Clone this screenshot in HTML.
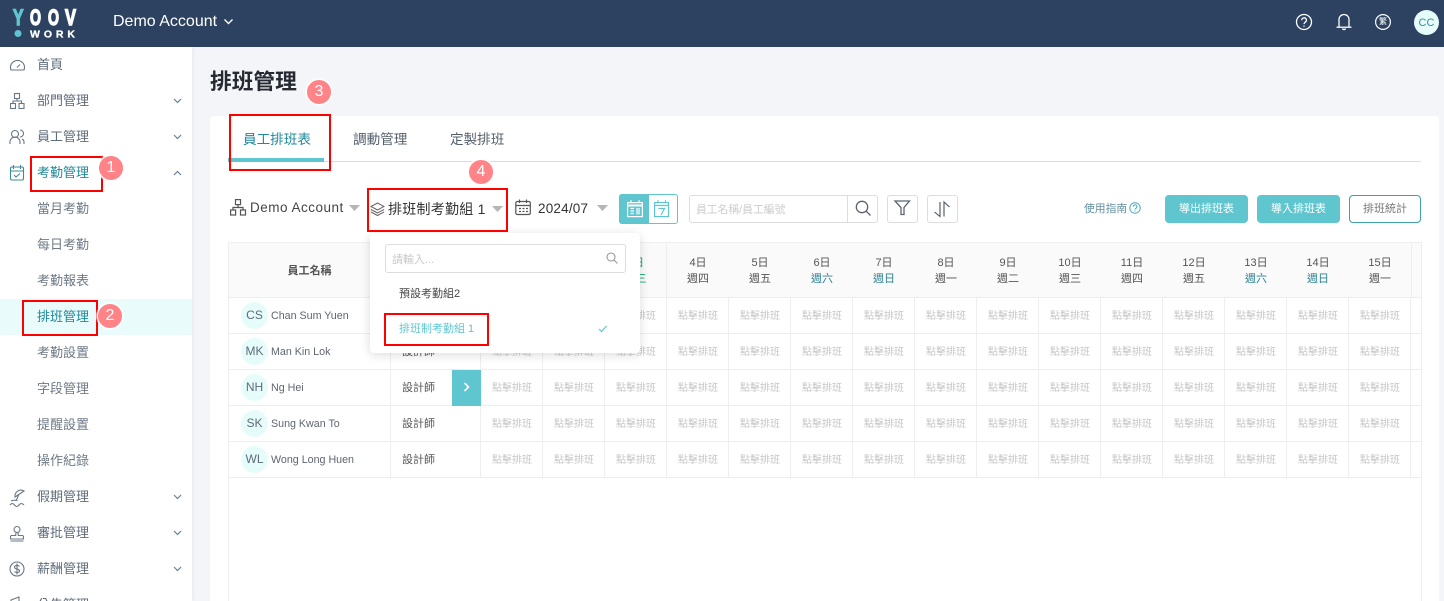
<!DOCTYPE html>
<html lang="zh-Hant"><head><meta charset="utf-8"><title>排班管理</title>
<style>
*{box-sizing:border-box}
html,body{margin:0;padding:0;height:601px;overflow:hidden}
#w{position:absolute;left:0;top:0;width:1444px;height:601px;overflow:hidden;background:#f4f5f8;font-family:"Liberation Sans","Noto Sans CJK TC",sans-serif;color:#333}
.a{position:absolute;white-space:nowrap}
svg{position:absolute;overflow:visible}
#top{left:0;top:0;width:1444px;height:47px;background:#2c4260}
#side{left:0;top:47px;width:192px;height:554px;background:#fff;box-shadow:1px 0 4px rgba(0,0,0,.06)}
.m{position:absolute;left:37px;font-size:13px;line-height:18px;color:#5f6b7a;white-space:nowrap}
.s{color:#6f7a86}
.ic{fill:none;stroke:#6b7785;stroke-width:1.1}
.ch{fill:none;stroke:#66809a;stroke-width:1.2}
.bad{position:absolute;width:26px;height:26px;border-radius:50%;background:#ff8387;border:1px solid #fff;color:#fff;font-size:16px;line-height:24px;text-align:center;box-shadow:0 0 0 1px rgba(255,255,255,.6)}
.red{position:absolute;border:2px solid #f00}
#card{left:210px;top:116px;width:1229px;height:485px;background:#fff;border-radius:4px 4px 0 0}
.btn{position:absolute;top:195px;height:28px;border-radius:4px;background:#5fc6cf;color:#fff;font-size:11px;line-height:28px;text-align:center}
.tb{position:absolute;left:228px;top:242px;width:1194px;height:359px;border-left:1px solid #eee;border-right:1px solid #eee;border-top:1px solid #eee}
.hd{position:absolute;top:243px;height:55px;background:#fafafa;border-right:1px solid #eee;border-bottom:1px solid #eee;font-size:11px;line-height:16px;text-align:center;color:#555;padding-top:12px}
.hd b{font-weight:400;color:#2f8394}
.r{position:absolute;left:229px;width:1192px;height:36px;border-bottom:1px solid #eee}
.av{position:absolute;left:12px;top:4px;width:27px;height:27px;border-radius:50%;background:#e6fcfb;color:#5f6b7a;font-size:12px;line-height:26px;text-align:center}
.n{position:absolute;left:42px;top:0;line-height:36px;font-size:10.7px;color:#5f6672;white-space:nowrap}
.j{position:absolute;left:173px;top:0;line-height:36px;font-size:11px;color:#555}
.v{position:absolute;top:0;width:1px;height:35px;background:#eee}
.gr{display:flex;position:absolute;left:252px;top:0;height:35px}
.gr i{display:block;width:62px;border-right:1px solid #eee;line-height:37px;padding-left:1px;font-size:10px;color:#c6c6c6;text-align:center;font-style:normal;white-space:nowrap}
.gr i:last-child{width:10px;border:0;font-size:0}
</style></head><body><div id="w">

<div class="a" id="top"></div>
<svg style="left:0;top:0" width="90" height="47">
<text x="13" y="25" font-size="22" font-weight="700" textLength="10.5" lengthAdjust="spacingAndGlyphs" fill="#5fc6cf" stroke="#5fc6cf" stroke-width="1.500" font-family="Liberation Sans">Y</text>
<text x="30" y="25" font-size="22" font-weight="700" textLength="11" lengthAdjust="spacingAndGlyphs" fill="#fff" stroke="#fff" stroke-width="1.500" font-family="Liberation Sans">O</text>
<text x="48" y="25" font-size="22" font-weight="700" textLength="11" lengthAdjust="spacingAndGlyphs" fill="#fff" stroke="#fff" stroke-width="1.500" font-family="Liberation Sans">O</text>
<text x="65" y="25" font-size="22" font-weight="700" textLength="11" lengthAdjust="spacingAndGlyphs" fill="#fff" stroke="#fff" stroke-width="1.500" font-family="Liberation Sans">V</text>
<circle cx="18" cy="33.500" r="3.500" fill="#5fc6cf"/>
<text x="30" y="37.500" font-size="10.500" font-weight="700" textLength="45" fill="#fff" stroke="#fff" stroke-width=".3" font-family="Liberation Sans">WORK</text>
</svg>
<div class="a" style="left:113px;top:12px;font-size:16px;line-height:20px;color:#fff">Demo Account</div>
<svg style="left:223px;top:18px" width="12" height="8"><path d="M1.500 1.500L5.500 5.500L9.500 1.500" fill="none" stroke="#fff" stroke-width="1.400"/></svg>
<svg style="left:1295px;top:13px" width="18" height="18" fill="none" stroke="#fff" stroke-width="1.300"><circle cx="9" cy="9" r="7.500"/><path d="M6.800 7.200a2.300 2.300 0 1 1 3.500 1.900c-.9.600-1.300 1-1.300 2"/><path d="M9 12.600v1.200"/></svg>
<svg style="left:1335px;top:12px" width="18" height="20" fill="none" stroke="#fff" stroke-width="1.300"><path d="M4 15V7.500a5 5 0 0 1 10 0V15"/><path d="M1.500 15.200h15"/><path d="M7.500 16.500a1.600 1.600 0 0 0 3 0"/></svg>
<svg style="left:1375px;top:14px" width="16" height="16" fill="none" stroke="#fff" stroke-width="1.200"><circle cx="8" cy="8" r="7.400"/></svg>
<div class="a" style="left:1379px;top:16px;font-size:8px;line-height:12px;color:#d5dbe2;font-weight:700">繁</div>
<div class="a" style="left:1414px;top:10px;width:25px;height:25px;border-radius:50%;background:#e6fcfb;color:#3f8a9c;font-size:11px;line-height:26px;text-align:center">CC</div>

<div class="a" id="side"></div>
<div class="a" style="left:0;top:299px;width:192px;height:36px;background:#e9fbfa"></div>
<div class="m" style="top:56px">首頁</div>
<div class="m" style="top:92px">部門管理</div>
<div class="m" style="top:128px">員工管理</div>
<div class="m" style="top:164px;color:#1f8a9c">考勤管理</div>
<div class="m s" style="top:200px">當月考勤</div>
<div class="m s" style="top:236px">每日考勤</div>
<div class="m s" style="top:272px">考勤報表</div>
<div class="m" style="top:308px;color:#1f8a9c">排班管理</div>
<div class="m s" style="top:344px">考勤設置</div>
<div class="m s" style="top:380px">字段管理</div>
<div class="m s" style="top:416px">提醒設置</div>
<div class="m s" style="top:452px">操作紀錄</div>
<div class="m" style="top:488px">假期管理</div>
<div class="m" style="top:524px">審批管理</div>
<div class="m" style="top:560px">薪酬管理</div>
<div class="m" style="top:596px">公告管理</div>

<svg style="left:0;top:47px" width="192" height="554">
<g class="ic">
<path d="M11 23a7 7 0 1 1 13 0z"/><path d="M17 20.500l3-3"/>
<rect x="14.500" y="46.500" width="5" height="5"/><rect x="10.500" y="56.500" width="5" height="5"/><rect x="19" y="56.500" width="5" height="5"/><path d="M17 51.500v2.500M13 56.500v-2.500h8.500v2.500"/>
<circle cx="15" cy="87" r="3.500"/><path d="M10 97v-2a5 5 0 0 1 10 0v2M20 83a3.500 3.500 0 0 1 0 7M22 92c1.300.7 2 1.700 2 3v2"/>
<g stroke="#3f8a9c"><rect x="10.500" y="120" width="13" height="13" rx="1.500"/><path d="M10.500 124h13M13.500 118v4M20.500 118v4M14 128l2 2 4-3.500"/></g>
<path d="M15 450a6 6 0 0 1 9-6zM19 447l-2.500 6M11 454c2-1 4-1 6.500-.5M10 458c1.500-2 3-2 4.500 0s3 2 4.500 0 3-2 5 0"/>
<circle cx="17" cy="482.500" r="3"/><path d="M16 485.500l-.3 3h-4a1.200 1.200 0 0 0-1.200 1.200V492h13v-2.300a1.200 1.200 0 0 0-1.200-1.200h-4l-.3-3M10.500 494h13"/>
<circle cx="17" cy="522" r="7"/><path d="M19.500 519.500c-1-1.500-5-1.500-5 .8s5 1.200 5 3.500-4 2.200-5 .8M17 516.500v11"/>
<path d="M11 553l8-3v7l-8-2z"/>
</g>
<g class="ch" transform="translate(0 1)">
<path d="M174 51l3.500 3.500L181 51M174 87l3.500 3.500L181 87M174 127l3.500-3.500L181 127M174 447l3.500 3.500L181 447M174 483l3.500 3.500L181 483M174 519l3.500 3.500L181 519"/>
</g>
</svg>

<div class="a" style="left:210px;top:69px;font-size:21.700px;line-height:26px;font-weight:700;color:#262a33">排班管理</div>
<div class="a" id="card"></div>

<div class="a" style="left:243px;top:131px;font-size:13.600px;line-height:18px;color:#1f8a9c">員工排班表</div>
<div class="a" style="left:353px;top:131px;font-size:13.600px;line-height:18px;color:#555f6b">調動管理</div>
<div class="a" style="left:450px;top:131px;font-size:13.600px;line-height:18px;color:#555f6b">定製排班</div>
<div class="a" style="left:228px;top:161px;width:1193px;height:1px;background:#ddd"></div>
<div class="a" style="left:228px;top:158px;width:96px;height:4px;background:#5fc6cf"></div>

<svg style="left:230px;top:199px" width="17" height="17" fill="none" stroke="#555" stroke-width="1.200"><rect x="5.500" y=".6" width="5" height="5"/><rect x=".6" y="11" width="5" height="5"/><rect x="10.500" y="11" width="5" height="5"/><path d="M8 5.600V8.500M3 11V8.500H13V11"/></svg>
<div class="a" style="left:250px;top:199px;font-size:13.500px;line-height:17px;color:#444;letter-spacing:.5px">Demo Account</div>
<svg style="left:349px;top:205px" width="12" height="7"><path d="M0 0H11L5.500 6z" fill="#b5b5b5"/></svg>
<svg style="left:370px;top:202px" width="15" height="15" fill="none" stroke="#666" stroke-width="1"><path d="M7.500 1L14 4.500 7.500 8 1 4.500z"/><path d="M1 7.500L7.500 11 14 7.500M1 10L7.500 13.500 14 10"/></svg>
<div class="a" style="left:388px;top:200px;font-size:14px;line-height:18px;color:#333;letter-spacing:.25px">排班制考勤組 1</div>
<svg style="left:492px;top:206px" width="12" height="7"><path d="M0 0H11L5.500 6z" fill="#b5b5b5"/></svg>
<svg style="left:515px;top:199px" width="17" height="17" fill="none" stroke="#555" stroke-width="1.200"><rect x=".8" y="2.500" width="14.500" height="13" rx="1.500"/><path d="M.8 6.500H15.300M4.500 .5V4M11.500 .5V4M4 9.500h2M7.500 9.500h2M11 9.500h2M4 12.500h2M7.500 12.500h2M11 12.500h2"/></svg>
<div class="a" style="left:538px;top:200px;font-size:13.500px;line-height:17px;color:#333;letter-spacing:.2px">2024/07</div>
<svg style="left:597px;top:205px" width="12" height="7"><path d="M0 0H11L5.500 6z" fill="#b5b5b5"/></svg>

<div class="a" style="left:619px;top:194px;width:59px;height:30px;border:1px solid #5fc6cf;border-radius:3px;background:#fff"></div>
<div class="a" style="left:619px;top:194px;width:30px;height:30px;background:#5fc6cf;border-radius:3px 0 0 3px"></div>
<svg style="left:627px;top:200px" width="16" height="18" fill="none" stroke="#fff" stroke-width="1.200"><rect x=".6" y="2.600" width="14.800" height="14"/><path d="M.6 5.500H15.400" stroke-width="2"/><path d="M4 .3V3M12 .3V3M3.500 8.500H7M3.500 11H7M3.500 13.500H7M10 8v6.500M12 8v6.500"/></svg>
<svg style="left:654px;top:200px" width="15" height="18" fill="none" stroke="#5fc6cf" stroke-width="1.200"><rect x=".6" y="2.600" width="14" height="14"/><path d="M.6 5.500H14.600M4 .3V3M11.500 .3V3M4.500 8.500H10.500L7 15"/></svg>

<div class="a" style="left:689px;top:195px;width:189px;height:28px;border:1px solid #ddd;border-radius:3px;background:#fff"></div>
<div class="a" style="left:847px;top:195px;width:1px;height:28px;background:#ddd"></div>
<div class="a" style="left:696px;top:203px;font-size:10.800px;line-height:14px;color:#cccccc">員工名稱/員工編號</div>
<svg style="left:855px;top:200px" width="17" height="17" fill="none" stroke="#5b6470" stroke-width="1.300"><circle cx="7" cy="7" r="5.700"/><path d="M11.200 11.200L15.500 15.500"/></svg>
<div class="a" style="left:887px;top:195px;width:31px;height:28px;border:1px solid #ddd;border-radius:3px"></div>
<svg style="left:894px;top:200px" width="17" height="16" fill="none" stroke="#5b6470" stroke-width="1.300"><path d="M1 1H15.500L10 7.500V14.500H7V7.500z"/></svg>
<div class="a" style="left:927px;top:195px;width:31px;height:28px;border:1px solid #ddd;border-radius:3px"></div>
<svg style="left:933px;top:201px" width="19" height="17" fill="none" stroke="#4b5460" stroke-width="1.100"><path d="M7 1V15.500L1.500 11M11 15.500V1L16.500 6"/></svg>

<div class="a" style="left:1084px;top:202px;font-size:10.800px;line-height:14px;color:#5f8ea0">使用指南</div>
<svg style="left:1129px;top:202px" width="12" height="12" fill="none" stroke="#4fa9b8"><circle cx="6" cy="6" r="5.200"/><path d="M4.300 4.700a1.800 1.800 0 1 1 2.700 1.500c-.7.400-1 .700-1 1.300M6 8.500v1"/></svg>
<div class="btn" style="left:1165px;width:83px">導出排班表</div>
<div class="btn" style="left:1257px;width:83px">導入排班表</div>
<div class="btn" style="left:1349px;width:72px;background:#fff;border:1px solid #3f9fae;color:#777;line-height:26px">排班統計</div>

<div class="tb"></div>
<div class="hd" style="left:229px;width:162px;padding-top:20px;font-weight:700">員工名稱</div>
<div class="hd" style="left:391px;width:90px"></div>
<div class="hd" style="left:481px;width:62px">1日<br>週一</div>
<div class="hd" style="left:543px;width:62px">2日<br>週二</div>
<div class="hd" style="left:605px;width:62px;color:#12ad6b">3日<br>週三</div>
<div class="hd" style="left:667px;width:63px">4日<br>週四</div>
<div class="hd" style="left:729px;width:63px">5日<br>週五</div>
<div class="hd" style="left:791px;width:63px">6日<br><b>週六</b></div>
<div class="hd" style="left:853px;width:63px">7日<br><b>週日</b></div>
<div class="hd" style="left:915px;width:63px">8日<br>週一</div>
<div class="hd" style="left:977px;width:63px">9日<br>週二</div>
<div class="hd" style="left:1039px;width:63px">10日<br>週三</div>
<div class="hd" style="left:1101px;width:63px">11日<br>週四</div>
<div class="hd" style="left:1163px;width:63px">12日<br>週五</div>
<div class="hd" style="left:1225px;width:63px">13日<br><b>週六</b></div>
<div class="hd" style="left:1287px;width:63px">14日<br><b>週日</b></div>
<div class="hd" style="left:1349px;width:63px">15日<br>週一</div>
<div class="hd" style="left:1412px;width:9px;border-right:0"></div>

<div class="r" style="top:298px"><div class="av">CS</div><div class="n">Chan Sum Yuen</div><div class="j">設計師</div><div class="v" style="left:161px"></div><div class="v" style="left:251px"></div><div class="gr"><i>點擊排班</i><i>點擊排班</i><i>點擊排班</i><i>點擊排班</i><i>點擊排班</i><i>點擊排班</i><i>點擊排班</i><i>點擊排班</i><i>點擊排班</i><i>點擊排班</i><i>點擊排班</i><i>點擊排班</i><i>點擊排班</i><i>點擊排班</i><i>點擊排班</i><i>.</i></div></div>
<div class="r" style="top:334px"><div class="av">MK</div><div class="n">Man Kin Lok</div><div class="j">設計師</div><div class="v" style="left:161px"></div><div class="v" style="left:251px"></div><div class="gr"><i>點擊排班</i><i>點擊排班</i><i>點擊排班</i><i>點擊排班</i><i>點擊排班</i><i>點擊排班</i><i>點擊排班</i><i>點擊排班</i><i>點擊排班</i><i>點擊排班</i><i>點擊排班</i><i>點擊排班</i><i>點擊排班</i><i>點擊排班</i><i>點擊排班</i><i>.</i></div></div>
<div class="r" style="top:370px"><div class="av">NH</div><div class="n">Ng Hei</div><div class="j">設計師</div><div class="v" style="left:161px"></div><div class="v" style="left:251px"></div><div class="gr"><i>點擊排班</i><i>點擊排班</i><i>點擊排班</i><i>點擊排班</i><i>點擊排班</i><i>點擊排班</i><i>點擊排班</i><i>點擊排班</i><i>點擊排班</i><i>點擊排班</i><i>點擊排班</i><i>點擊排班</i><i>點擊排班</i><i>點擊排班</i><i>點擊排班</i><i>.</i></div></div>
<div class="r" style="top:406px"><div class="av">SK</div><div class="n">Sung Kwan To</div><div class="j">設計師</div><div class="v" style="left:161px"></div><div class="v" style="left:251px"></div><div class="gr"><i>點擊排班</i><i>點擊排班</i><i>點擊排班</i><i>點擊排班</i><i>點擊排班</i><i>點擊排班</i><i>點擊排班</i><i>點擊排班</i><i>點擊排班</i><i>點擊排班</i><i>點擊排班</i><i>點擊排班</i><i>點擊排班</i><i>點擊排班</i><i>點擊排班</i><i>.</i></div></div>
<div class="r" style="top:442px"><div class="av">WL</div><div class="n">Wong Long Huen</div><div class="j">設計師</div><div class="v" style="left:161px"></div><div class="v" style="left:251px"></div><div class="gr"><i>點擊排班</i><i>點擊排班</i><i>點擊排班</i><i>點擊排班</i><i>點擊排班</i><i>點擊排班</i><i>點擊排班</i><i>點擊排班</i><i>點擊排班</i><i>點擊排班</i><i>點擊排班</i><i>點擊排班</i><i>點擊排班</i><i>點擊排班</i><i>點擊排班</i><i>.</i></div></div>

<div class="a" style="left:452px;top:370px;width:29px;height:36px;background:#5fc6cf"></div>
<svg style="left:463px;top:382px" width="8" height="11"><path d="M1.500 1L5.500 5L1.500 9" fill="none" stroke="#fff" stroke-width="1.600"/></svg>

<div class="a" style="left:370px;top:233px;width:270px;height:120px;background:#fff;border-radius:4px;box-shadow:0 2px 10px rgba(0,0,0,.14)"></div>
<div class="a" style="left:385px;top:244px;width:241px;height:29px;border:1px solid #ddd;border-radius:3px;background:#fff"></div>
<div class="a" style="left:392px;top:253px;font-size:11px;line-height:14px;color:#c8c8c8">請輸入...</div>
<svg style="left:606px;top:252px" width="12" height="12" fill="none" stroke="#999" stroke-width="1.100"><circle cx="5" cy="5" r="4"/><path d="M8 8l3.500 3.500"/></svg>
<div class="a" style="left:399px;top:287px;font-size:11px;line-height:15px;color:#444">預設考勤組2</div>
<div class="a" style="left:399px;top:322px;font-size:11px;line-height:15px;color:#5fc6cf">排班制考勤組 1</div>
<svg style="left:598px;top:325px" width="10" height="8"><path d="M1 4L3.500 6.500L8.500 1" fill="none" stroke="#5fc6cf" stroke-width="1.200"/></svg>

<div class="red" style="left:30px;top:156px;width:73px;height:36px"></div>
<div class="red" style="left:22px;top:300px;width:76px;height:36px"></div>
<div class="red" style="left:229px;top:114px;width:102px;height:57px"></div>
<div class="red" style="left:367px;top:188px;width:141px;height:44px"></div>
<div class="red" style="left:384px;top:313px;width:105px;height:33px"></div>
<div class="bad" style="left:98px;top:155px">1</div>
<div class="bad" style="left:97px;top:303px">2</div>
<div class="bad" style="left:306px;top:79px">3</div>
<div class="bad" style="left:468px;top:159px">4</div>
</div></body></html>
